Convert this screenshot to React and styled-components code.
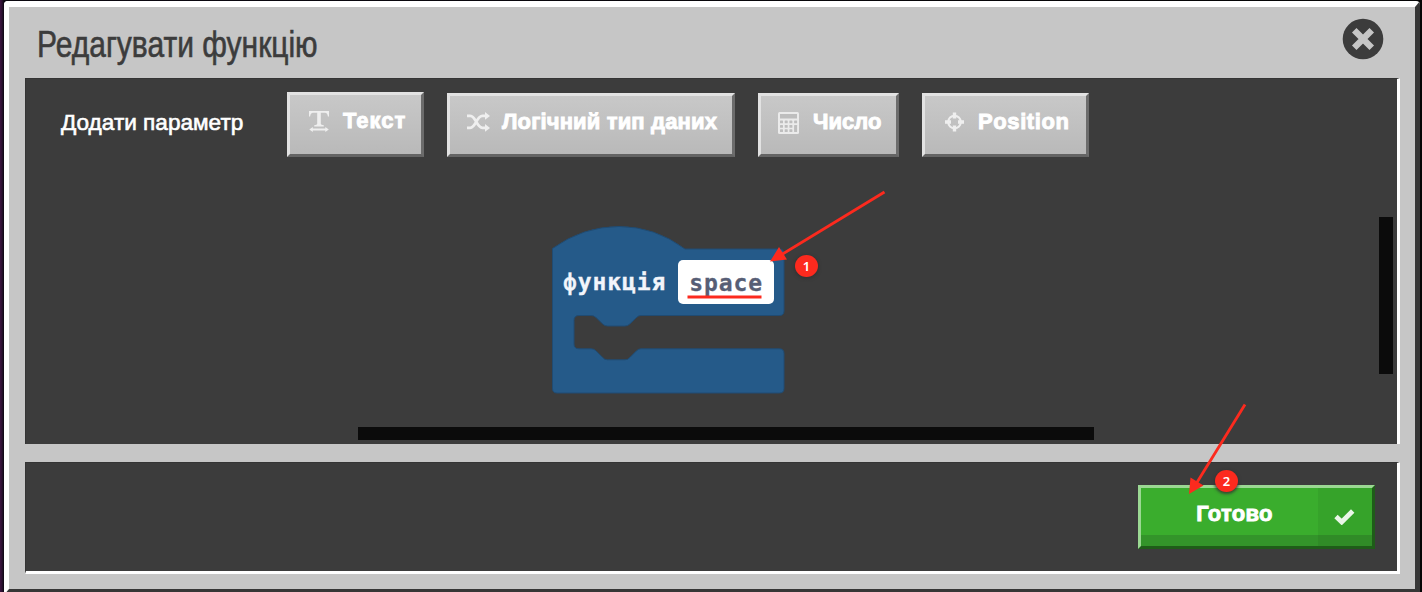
import React from "react";
import styled, { createGlobalStyle } from "styled-components";

const GlobalStyle = createGlobalStyle`
  * { box-sizing: border-box; }
  body { margin: 0; background: #0b0810; font-family: "Liberation Sans", Arial, sans-serif; }
`;

const Backdrop = styled.div`
  position: relative;
  width: 1422px;
  height: 592px;
  padding: 1px 2px 0 4px;
  overflow: hidden;
  background: linear-gradient(90deg, #3d1540 0, #2a1030 2px, #0b0810 4px, #050505 100%);
`;

const Dialog = styled.div`
  display: flex;
  flex-direction: column;
  width: 1416px;
  height: 594px;
  padding: 0 15px 0 16px;
  border: 6px solid;
  border-width: 6px 5px 6px 5px;
  border-color: #fff #363636 #363636 #fff;
  border-radius: 4px;
  background: #c6c6c6;
`;

const Header = styled.header`
  display: flex;
  justify-content: space-between;
  height: 71px;
  padding: 11px 16px 0 12px;
`;

const Title = styled.h1`
  margin: 6px 0 0;
  font-size: 36px;
  line-height: 42px;
  font-weight: 400;
  color: #3c3c3c;
  white-space: nowrap;
  transform: scaleX(0.833);
  transform-origin: left;
  -webkit-text-stroke: 0.6px #3c3c3c;
`;

const CloseButton = styled.button`
  width: 42px;
  height: 42px;
  padding: 0;
  border: 0;
  background: none;
`;

const Panel = styled.section`
  height: ${(p) => p.$height}px;
  background: #3c3c3c;
  border-right: 3px solid #fff;
  border-top: 1px solid #343434;
  border-bottom: ${(p) => (p.$closed ? "3px solid #fff" : "0")};
  border-left: 1px solid #343434;
`;

const Toolbar = styled.div`
  display: flex;
  height: 78px;
  padding: 13px 0 0 35px;
  align-items: flex-end;
`;

const ToolbarLabel = styled.span`
  width: 226px;
  height: 47px;
  font-size: 22.6px;
  line-height: 26px;
  color: #fff;
  white-space: nowrap;
  -webkit-text-stroke: 0.6px #fff;
`;

const ParamButton = styled.button`
  display: flex;
  align-items: flex-start;
  width: ${(p) => p.$width}px;
  height: ${(p) => p.$height || 64}px;
  margin-right: 23px;
  padding: 13px 0 0 ${(p) => p.$pad}px;
  border: 3px solid;
  border-color: #e2e2e2 #6c6c6c #646464 #e2e2e2;
  background: linear-gradient(#c8c8c8, #b9b9b9);
  color: #fff;
  font: 700 22px/26px "Liberation Sans", Arial, sans-serif;
  letter-spacing: ${(p) => p.$spacing}px;
  white-space: nowrap;
  -webkit-text-stroke: 0.9px #fff;

  svg { flex: none; margin: 3px ${(p) => p.$gap}px 0 0; }
`;

const Canvas = styled.div`
  position: relative;
  height: 287px;
`;

const Block = styled.div`
  position: absolute;
  left: 525px;
  top: 68px;
  width: 234px;
  height: 170px;

  > svg { position: absolute; inset: 0; }
`;

const BlockRow = styled.div`
  position: relative;
  display: flex;
  align-items: center;
  height: 44px;
  margin: 35px 0 0 12px;
  font: 700 23px/32px "DejaVu Sans Mono", monospace;
  letter-spacing: 0.9px;
  color: #f2f5fb;
  -webkit-text-stroke: 0.3px;
`;

const NameField = styled.span`
  display: flex;
  justify-content: center;
  width: 96px;
  height: 44px;
  margin-left: 12px;
  padding-top: 7px;
  border-radius: 5px;
  background: #fff;
  color: #575e75;
`;

const Scrollbar = styled.div`
  position: absolute;
  left: ${(p) => p.$x}px;
  top: ${(p) => p.$y}px;
  width: ${(p) => p.$w}px;
  height: ${(p) => p.$h}px;
  background: #0b0b0b;
`;

const Footer = styled(Panel)`
  display: flex;
  justify-content: flex-end;
  margin-top: 18px;
  padding: 22px 22px 0 0;
`;

const DoneButton = styled.button`
  display: flex;
  width: 237px;
  height: 64px;
  padding: 0;
  border: 3px solid;
  border-color: #9bd893 #1f5c19 #1f5c19 #9bd893;
  background: linear-gradient(#3aad2d 0, #3aad2d 47px, #33942a 47px);
  color: #fff;
  font: 700 22px/26px "Liberation Sans", Arial, sans-serif;
  letter-spacing: 0.3px;
  -webkit-text-stroke: 0.9px #fff;
`;

const DoneText = styled.span`
  flex: 1;
  padding: 13px 0 0 10px;
`;

const DoneIcon = styled.span`
  width: 54px;
  height: 58px;
  padding: 21px 0 0 16px;
  background: rgba(0, 0, 0, 0.055);

  svg { display: block; }
`;

const Annotations = styled.svg`
  position: absolute;
  inset: 0;
  pointer-events: none;
`;

const Badge = styled.span`
  position: absolute;
  left: ${(p) => p.$x}px;
  top: ${(p) => p.$y}px;
  width: 23px;
  height: 22px;
  border-radius: 50%;
  background: #fc2a1e;
  box-shadow: 0 1px 3px 1px rgba(50, 50, 50, 0.8);
  color: #fff;
  font: 600 13px/22px "Noto Sans", sans-serif;
  text-align: center;
`;

const TextWidthIcon = () => (
  <svg width="20" height="22" viewBox="0 0 20 22" fill="#efefef">
    <path d="M0 0h20v5.500h-1.100Q18.400 1.900 16 1.800h-4.200v11q0 1.200 3 1.400v1.200H5.200v-1.200q3-.2 3-1.400V1.800H4Q1.600 1.900 1.100 5.500H0z" />
    <path d="M.3 18.500 3.800 16v1.600h12.500v-1.600l3.500 2.500-3.500 2.500v-1.600H3.800v1.600z" />
  </svg>
);

const ShuffleIcon = () => (
  <svg width="23" height="20" viewBox="0 0 23 20" fill="none" stroke="#efefef" strokeWidth="2.800">
    <path d="M0 3.800h3.200C9.200 3.800 9.200 15.800 15.500 15.800H19M0 15.800h3.200C9.200 15.800 9.200 3.800 15.500 3.800H19" />
    <path d="M18 0l5 3.900-5 3.900zM18 12l5 3.900-5 3.900z" fill="#efefef" stroke="none" />
  </svg>
);

const CalculatorIcon = () => (
  <svg width="21" height="22" viewBox="0 0 21 22">
    <rect width="21" height="22" rx="1.500" fill="#ebebeb" />
    <g fill="#bebebe">
      <rect x="2" y="2" width="17" height="4.500" />
      {[8.5, 12.9, 17.3].map((y) =>
        [2, 6.7, 11.4, 16.1].map((x) =>
          x === 16.1 && y === 17.3 ? null : (
            <rect key={`${x}-${y}`} x={x} y={y} width="3" height={x === 16.1 && y === 12.9 ? 7.2 : 2.8} rx=".5" />
          )
        )
      )}
    </g>
  </svg>
);

const TargetIcon = () => (
  <svg width="19" height="20" viewBox="0 0 19 20" fill="none" stroke="#efefef">
    <circle cx="9.500" cy="10" r="6.300" strokeWidth="2" />
    <path d="M9.500.5v6M9.500 13.500v6M0 10h6M13 10h6" strokeWidth="3.400" />
  </svg>
);

const BlockShape = () => (
  <svg width="234" height="170" viewBox="551 225 234 170">
    <path
      d="M552.500 248.500Q583 226.500 619 226.500T685 249H779.500Q784 249 784 253.500V311Q784 315.500 779.500 315.500H641Q638.500 315.500 636.500 317.500L630 323.800Q628 326 625 326H607.500Q604.500 326 602.500 323.800L596 317.500Q594 315.500 591 315.500H579Q574 315.500 574 320.500V344Q574 348.800 579 348.800H591Q594 348.800 596 350.800L602.500 357.300Q604.500 359.800 607.500 359.800H625Q628 359.800 630 357.300L636.500 350.800Q638.500 348.800 641 348.800H779.500Q784 348.800 784 353.500V388.500Q784 393 779.500 393H557Q552.500 393 552.500 388.500Z"
      fill="#255a89"
      stroke="#204b72"
    />
  </svg>
);

export default function App() {
  return (
    <Backdrop>
      <GlobalStyle />
      <Dialog>
        <Header>
          <Title>Редагувати функцію</Title>
          <CloseButton aria-label="Закрити">
            <svg width="42" height="42" viewBox="0 0 42 42">
              <circle cx="21" cy="21" r="20.300" fill="#3c3c3c" />
              <path d="M14.500 14.500 27.500 27.500M27.500 14.500 14.500 27.500" stroke="#c6c6c6" strokeWidth="6.400" strokeLinecap="square" />
            </svg>
          </CloseButton>
        </Header>
        <Panel $height={366}>
          <Toolbar>
            <ToolbarLabel>Додати параметр</ToolbarLabel>
            <ParamButton $width={137} $height={65} $pad={19} $gap={14} $spacing={1}>
              <TextWidthIcon />Текст
            </ParamButton>
            <ParamButton $width={288} $pad={17} $gap={12} $spacing={0.15}>
              <ShuffleIcon />Логічний тип даних
            </ParamButton>
            <ParamButton $width={141} $pad={17} $gap={14} $spacing={0}>
              <CalculatorIcon />Число
            </ParamButton>
            <ParamButton $width={167} $pad={20} $gap={14} $spacing={0.6}>
              <TargetIcon />Position
            </ParamButton>
          </Toolbar>
          <Canvas>
            <Block>
              <BlockShape />
              <BlockRow>
                функція
                <NameField>space</NameField>
              </BlockRow>
            </Block>
            <Scrollbar $x={1353} $y={60} $w={14} $h={157} />
            <Scrollbar $x={332} $y={270} $w={736} $h={13} />
          </Canvas>
        </Panel>
        <Footer $height={112} $closed>
          <DoneButton>
            <DoneText>Готово</DoneText>
            <DoneIcon>
              <svg width="21" height="16" viewBox="0 0 21 16">
                <path d="M2 7.500 7.700 13 18.700 2" fill="none" stroke="#eaf6e8" strokeWidth="4.800" />
              </svg>
            </DoneIcon>
          </DoneButton>
        </Footer>
      </Dialog>
      <Annotations width="1422" height="592">
        <g stroke="#fc2a1e" strokeWidth="2.800">
          <path d="M884.500 192 781 255M1245 404.500 1196 484" />
          <path d="M687.500 297H761.500" />
        </g>
        <path d="M770 261.500 779 247 787 259.500ZM1189 494 1190.500 477.500 1203.500 485.500Z" fill="#fc2a1e" />
      </Annotations>
      <Badge $x={795} $y={255}>1</Badge>
      <Badge $x={1215} $y={470}>2</Badge>
    </Backdrop>
  );
}
